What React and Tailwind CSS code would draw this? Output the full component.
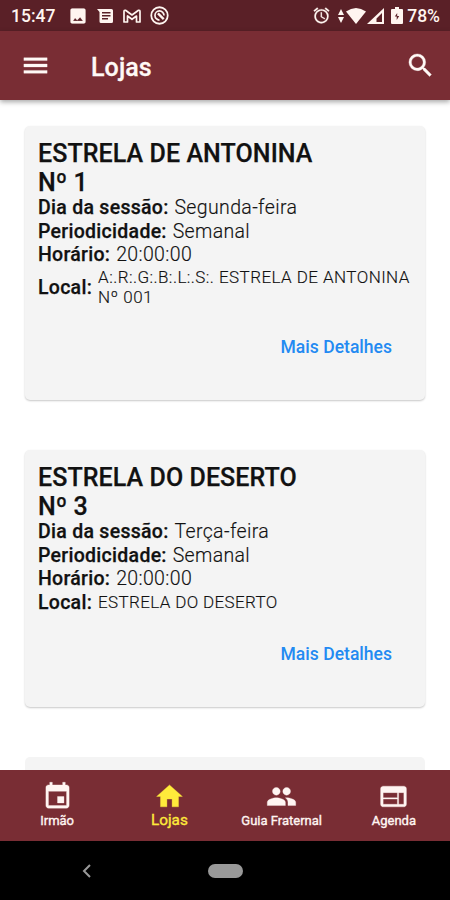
const ICONS = {
  image: "M21 19V5c0-1.1-.9-2-2-2H5c-1.1 0-2 .9-2 2v14c0 1.1.9 2 2 2h14c1.1 0 2-.9 2-2zM8.5 14.500l2.5 2.500L14.500 13.500l3.500 4.500H6l2.500-3.500z",
  menu: "M3 18h18v-2.200H3V18zm0-4.900h18v-2.200H3v2.200zm0-7.100v2.200h18V6H3z",
  search: "M15.500 14h-.79l-.28-.27A6.471 6.471 0 0 0 16 9.500 6.500 6.500 0 1 0 9.500 16c1.610 0 3.090-.59 4.230-1.570l.27.28v.79l5 4.990L20.490 19l-4.990-5zm-6 0C7.010 14 5 11.990 5 9.500S7.010 5 9.500 5 14 7.010 14 9.500 11.990 14 9.500 14z",
  alarm: "M22 5.720l-4.600-3.860-1.290 1.530 4.600 3.860L22 5.720zM7.880 3.390L6.600 1.860 2 5.710l1.290 1.530 4.590-3.850zM12.500 8H11v6l4.750 2.850.75-1.230-4-2.370V8zM12 4c-4.970 0-9 4.030-9 9s4.020 9 9 9a9 9 0 0 0 0-18zm0 16c-3.870 0-7-3.130-7-7s3.130-7 7-7 7 3.130 7 7-3.130 7-7 7z",
  event: "M17 12h-5v5h5v-5zM16 1v2H8V1H6v2H5c-1.110 0-1.990.9-1.990 2L3 19c0 1.100.89 2 2 2h14c1.100 0 2-.9 2-2V5c0-1.100-.9-2-2-2h-1V1h-2zm3 18H5V8h14v11z",
  home: "M10 20v-6h4v6h5v-8h3L12 3 2 12h3v8z",
  people: "M16 11c1.660 0 2.990-1.340 2.990-3S17.660 5 16 5c-1.660 0-3 1.340-3 3s1.340 3 3 3zm-8 0c1.660 0 2.990-1.340 2.990-3S9.660 5 8 5C6.340 5 5 6.340 5 8s1.340 3 3 3zm0 2c-2.330 0-7 1.170-7 3.500V19h14v-2.500c0-2.330-4.670-3.500-7-3.500zm8 0c-.29 0-.62.020-.97.050 1.160.84 1.970 1.970 1.970 3.450V19h6v-2.500c0-2.330-4.670-3.500-7-3.500z",
  web: "M20 4H4c-1.100 0-1.990.9-1.990 2L2 18c0 1.100.9 2 2 2h16c1.100 0 2-.9 2-2V6c0-1.100-.9-2-2-2zm-5 14H4v-4h11v4zm0-5H4V9h11v4zm5 5h-4V9h4v9z",
};

function Icon({ name, className }) {
  return (
    <svg viewBox="0 0 24 24" fill="currentColor" stroke="currentColor" strokeWidth="0.25" className={className}>
      <path d={ICONS[name]} />
    </svg>
  );
}

function StatusBar() {
  return (
    <div className="flex h-[31px] shrink-0 items-center bg-[#5a2027] pl-[11px] pr-[10px] text-[#fff5f0]">
      <span className="w-[59px] pt-[2px] text-[17.5px] font-medium leading-none">15:47</span>
      <Icon name="image" className="-ml-[2px] size-[20px]" />
      <svg viewBox="0 0 16 14" className="ml-[9px] h-[14px] w-4" fill="currentColor">
        <path fillRule="evenodd" d="M0 0h14.500q1.500 0 1.500 1.500v11q0 1.500-1.500 1.500H4q-1.500 0-1.500-1.500V3zM5 3h8.500v1.500H5zm0 3h8.500v1.500H5zm0 3h6v1.500H5z" />
      </svg>
      <svg viewBox="0 0 18 14" className="ml-[10px] h-[14px] w-[18px]" fill="none" stroke="currentColor" strokeWidth="1.700">
        <path strokeLinejoin="round" d="M1 2.500Q1 1 2.500 1.300L9 6l6.500-4.700Q17 1 17 2.500V13h-3.500V7L9 10.300 4.500 7v6H1z" />
      </svg>
      <svg viewBox="0 0 18 18" className="ml-[9px] size-[19px]" fill="none" stroke="currentColor">
        <circle cx="9" cy="9" r="7.800" strokeWidth="1.700" />
        <path strokeWidth="1.600" d="M9 13.300A4.300 4.300 0 1 1 13.300 9" />
        <path strokeWidth="2.200" d="M7.500 7l5.500 5.500" />
      </svg>
      <div className="ml-auto flex items-center">
        <Icon name="alarm" className="size-[19px]" />
        <svg viewBox="0 0 6 14" className="ml-[7px] h-[14px] w-[6px]" fill="currentColor">
          <path d="M3 0l3 6H0zM3 14L0 8h6z" />
        </svg>
        <svg viewBox="0 0 20 16" className="ml-[2px] h-4 w-5" fill="currentColor">
          <path d="M0 3.500Q10-3.500 20 3.500L10 16z" />
        </svg>
        <svg viewBox="0 0 17 16" className="ml-px h-4 w-[17px]" fill="currentColor">
          <path fillRule="evenodd" d="M17 0v16H0zM15 5L9.500 10.500V14H15z" />
        </svg>
        <svg viewBox="0 0 12 17" className="ml-[7px] h-[17px] w-3" fill="currentColor">
          <path fillRule="evenodd" d="M4 0h4v2h3q1 0 1 1v13q0 1-1 1H1q-1 0-1-1V3q0-1 1-1h3zM6.200 6L3.800 9.500h1.900V13l2.500-4H6.200z" />
        </svg>
        <span className="ml-[4px] pt-[2px] text-[17.5px] font-medium leading-none">78%</span>
      </div>
    </div>
  );
}

function AppBar() {
  return (
    <header className="z-10 flex h-[69px] shrink-0 items-center bg-[#792d34] pl-5 pr-[14px] text-[#fff9f6] shadow-[0_2px_5px_rgba(0,0,0,0.35)]">
      <Icon name="menu" className="size-[31px]" />
      <h1 className="ml-[40px] pt-[3px] text-[25px] font-medium leading-none tracking-[0.1px] [-webkit-text-stroke:0.3px]">Lojas</h1>
      <Icon name="search" className="ml-auto size-[31px]" />
    </header>
  );
}

function Field({ label, value }) {
  return (
    <p className="whitespace-nowrap text-[19.5px] leading-[23.7px]">
      <span className="mr-px font-medium tracking-[0.28px] [-webkit-text-stroke:0.25px]">{label}</span>{" "}
      <span className="font-light tracking-[0.36px] [-webkit-text-stroke:0.15px]">{value}</span>
    </p>
  );
}

function LodgeCard({ name, number, day, place, tall }) {
  return (
    <article className={`flex shrink-0 flex-col rounded-[5px] bg-[#f4f4f4] px-[13px] pt-[14px] shadow-[0_1px_2px_rgba(0,0,0,0.22)] ${tall ? "h-[274px]" : "h-[257px]"}`}>
      <h2 className="-mb-px whitespace-nowrap text-[25px] font-medium leading-[28.5px] tracking-[0.08px] [-webkit-text-stroke:0.25px]">
        {name}
        <br />
        {number}
      </h2>
      <Field label="Dia da sessão:" value={day} />
      <Field label="Periodicidade:" value="Semanal" />
      <Field label="Horário:" value="20:00:00" />
      <div className="flex items-center">
        <span className="mr-[6px] text-[19.5px] font-medium leading-[23.7px] tracking-[0.28px] [-webkit-text-stroke:0.25px]">Local:</span>
        <p className={`whitespace-nowrap pb-px text-[17px] font-light leading-5 [-webkit-text-stroke:0.15px] ${tall ? "tracking-[0.44px]" : "tracking-[0.35px]"}`}>{place}</p>
      </div>
      <button className="mr-[20px] mt-[29px] self-end text-[17.5px] font-medium leading-5 tracking-[0.02px] text-[#238af2]">
        Mais Detalhes
      </button>
    </article>
  );
}

function Tab({ icon, label, active }) {
  return (
    <div className={`flex w-1/4 flex-col items-center pt-[11px] ${active ? "text-[#ffeb3b]" : "text-[#fff5f2]"}`}>
      <Icon name={icon} className="size-[31px]" />
      <span className={`whitespace-nowrap leading-[18px] [-webkit-text-stroke:0.35px] ${active ? "-mt-px text-[15.3px]" : "text-[13px]"}`}>{label}</span>
    </div>
  );
}

export default function App() {
  return (
    <div className="flex h-[900px] w-[450px] flex-col overflow-hidden bg-white font-[Roboto,sans-serif] text-[#111]">
      <StatusBar />
      <AppBar />
      <main className="flex min-h-0 flex-1 flex-col gap-[50px] overflow-hidden px-[25px] pt-[26px]">
        <LodgeCard
          name="ESTRELA DE ANTONINA"
          number="Nº 1"
          day="Segunda-feira"
          place={<>A:.R:.G:.B:.L:.S:. ESTRELA DE ANTONINA<br />Nº 001</>}
          tall
        />
        <LodgeCard name="ESTRELA DO DESERTO" number="Nº 3" day="Terça-feira" place="ESTRELA DO DESERTO" />
        <div className="h-[100px] shrink-0 rounded-[5px] bg-[#f4f4f4]" />
      </main>
      <nav className="flex h-[71px] shrink-0 bg-[#792d34] pl-px">
        <Tab icon="event" label="Irmão" />
        <Tab icon="home" label="Lojas" active />
        <Tab icon="people" label="Guia Fraternal" />
        <Tab icon="web" label="Agenda" />
      </nav>
      <div className="flex h-[59px] shrink-0 items-center bg-black pl-[82px] text-[#999]">
        <svg viewBox="0 0 9 14" className="h-[14px] w-[9px]" fill="none" stroke="currentColor" strokeWidth="2">
          <path d="M8 1L2 7l6 6" />
        </svg>
        <div className="ml-[117px] h-[14px] w-[35px] rounded-full bg-[#999]" />
      </div>
    </div>
  );
}
